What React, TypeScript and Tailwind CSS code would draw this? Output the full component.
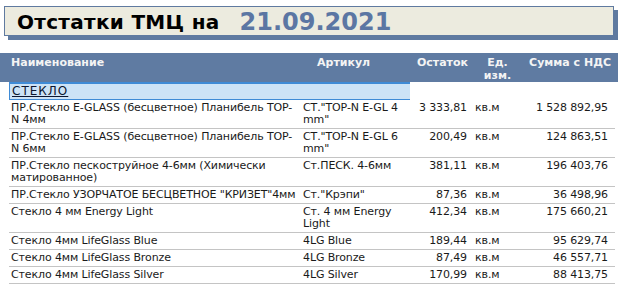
import React from "react";

type Row = { name: string; art: string; qty: string; unit: string; sum: string };

const rows: Row[] = [
  { name: "ПР.Стекло E-GLASS (бесцветное) Планибель TOP-N 4мм", art: 'СТ."TOP-N E-GL 4 mm"', qty: "3 333,81", unit: "кв.м", sum: "1 528 892,95" },
  { name: "ПР.Стекло E-GLASS (бесцветное) Планибель TOP-N 6мм", art: 'СТ."TOP-N E-GL 6 mm"', qty: "200,49", unit: "кв.м", sum: "124 863,51" },
  { name: "ПР.Стекло пескоструйное 4-6мм (Химически матированное)", art: "Ст.ПЕСК. 4-6мм", qty: "381,11", unit: "кв.м", sum: "196 403,76" },
  { name: 'ПР.Стекло УЗОРЧАТОЕ БЕСЦВЕТНОЕ "КРИЗЕТ"4мм', art: 'Ст."Крэпи"', qty: "87,36", unit: "кв.м", sum: "36 498,96" },
  { name: "Стекло 4 мм Energy Light", art: "Ст. 4 мм Energy Light", qty: "412,34", unit: "кв.м", sum: "175 660,21" },
  { name: "Стекло 4мм LifeGlass Blue", art: "4LG Blue", qty: "189,44", unit: "кв.м", sum: "95 629,74" },
  { name: "Стекло 4мм LifeGlass Bronze", art: "4LG Bronze", qty: "87,49", unit: "кв.м", sum: "46 557,71" },
  { name: "Стекло 4мм LifeGlass Silver", art: "4LG Silver", qty: "170,99", unit: "кв.м", sum: "88 413,75" },
];

const cols = "grid grid-cols-[294px_107px_60px_45px_100px]";

export default function App() {
  return (
    <div
      className="w-[627px] h-[288px] overflow-hidden bg-white text-[11px] leading-[13px] text-[#1a1a1a]"
      style={{ fontFamily: '"DejaVu Sans", Verdana, sans-serif' }}
    >
      <div className="pl-[4px] pt-[6px]">
        <div className="w-[610px] h-[30px] border border-[#5f7aa0] bg-[#ecebdf] shadow-[4px_4px_0_#5f7aa0] flex items-center pl-[12px] pt-[1px]">
          <span className="text-[20px] font-bold text-black leading-none tracking-[0.3px]">Отстатки ТМЦ на</span>
          <span className="ml-[20px] text-[24px] font-bold text-[#5b76a3] leading-none">21.09.2021</span>
        </div>
      </div>

      <div className="mt-[17px] w-[618px] h-[29px] bg-[#5f7ba2] text-[#f4f4f4] font-bold">
        <div className={`${cols} pl-[9px] pt-[3px]`}>
          <div className="pl-[2px]">Наименование</div>
          <div className="pl-[14px]">Артикул</div>
          <div className="text-right pr-[2px]">Остаток</div>
          <div className="text-center pl-[10px]">Ед. изм.</div>
          <div className="text-right pr-[4px]">Сумма с НДС</div>
        </div>
      </div>

      <div className="pl-[9px] w-[615px] tracking-[-0.12px]">
        <div className="flex h-[18px]">
          <div className="w-[401px] bg-[#cde3f6] border-t-2 border-b border-l border-[#3f8bd6] pl-[2px] flex items-center">
            <span className="underline tracking-[1px] text-[12px] text-[#0b1630]">СТЕКЛО</span>
          </div>
        </div>
        {rows.map((r, i) => (
          <div key={i} className={`${cols} border-b border-[#c4c4c4] pt-[2px] pb-[2px] leading-[12px]`}>
            <div className="pl-[2px] pr-[7px]">{r.name}</div>
            <div className="pr-[4px]">{r.art}</div>
            <div className="text-right pr-[3px]">{r.qty}</div>
            <div className="pl-[5px]">{r.unit}</div>
            <div className="text-right pr-[7px]">{r.sum}</div>
          </div>
        ))}
      </div>
    </div>
  );
}
